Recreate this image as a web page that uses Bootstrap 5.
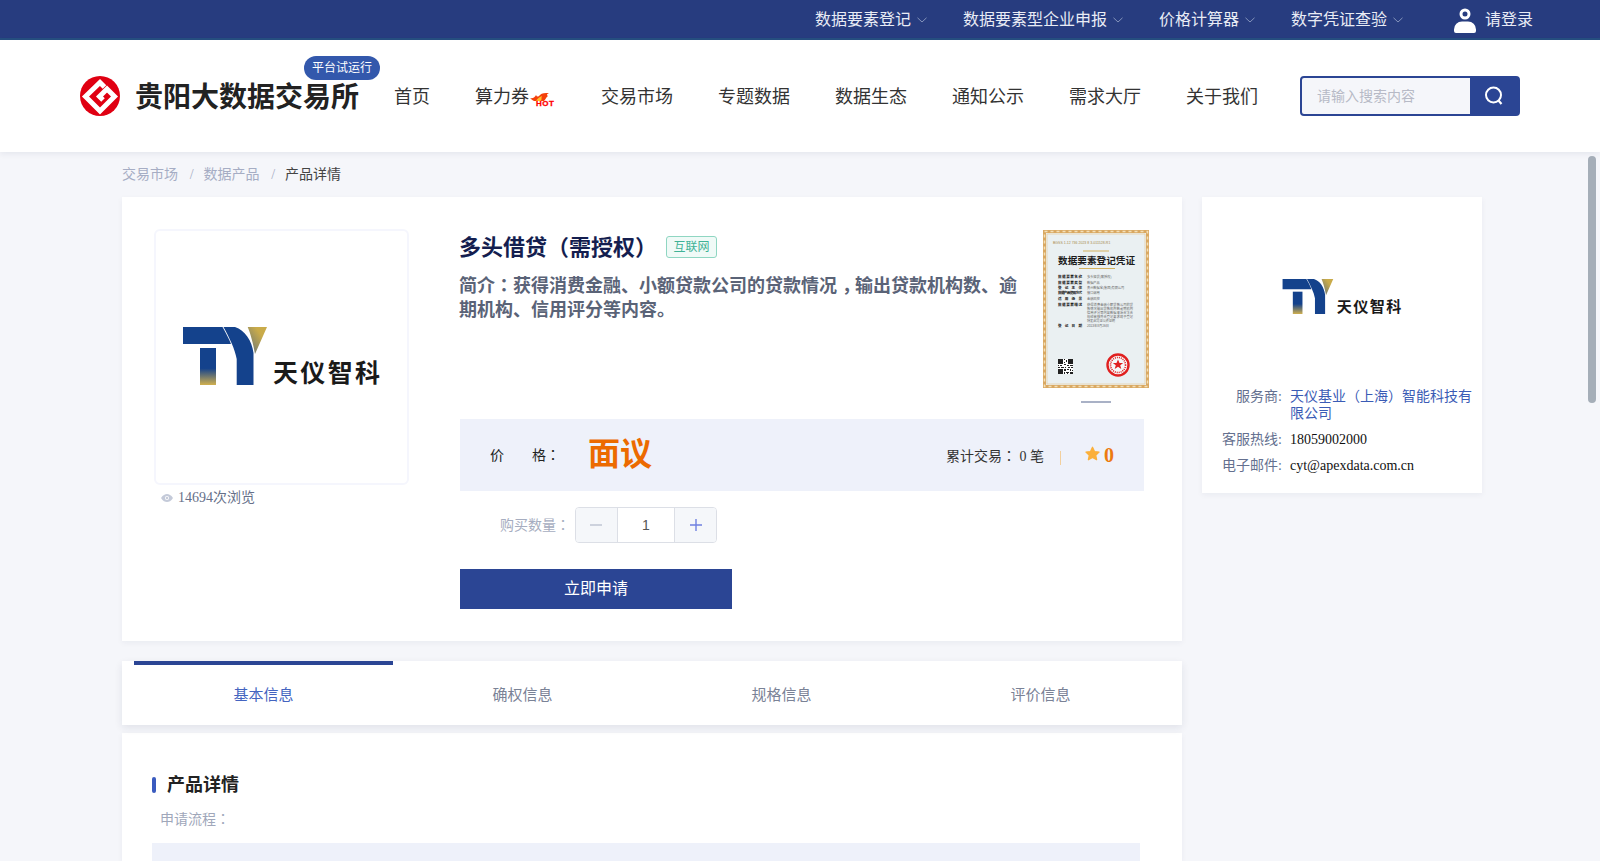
<!DOCTYPE html>
<html lang="zh-CN">
<head>
  <meta charset="UTF-8">
  <title>产品详情</title>
  <link href="https://cdn.jsdelivr.net/npm/bootstrap@5.3.0/dist/css/bootstrap.min.css" rel="stylesheet">
  <style>
    html, body { height: 861px; overflow: hidden; }
    body {
      background: #f5f6fa;
      font-family: "Liberation Serif", "Noto Sans CJK SC", serif;
      font-size: 14px;
      color: #222;
    }
    .cn-sans { font-family: "Liberation Sans", "Noto Sans CJK SC", sans-serif; }
    .mid-punct { font-family: "Noto Sans CJK TC", sans-serif; line-height: 1; }
    .low-comma { padding-left: 5px; margin-right: -5px; }

    .top-strip { height: 40px; background: #273c7f; border-bottom: 2px solid #264f80; padding: 2px 67px 0 0; color: #e9ecf5; font-size: 16px; }
    .top-item { gap: 6px; margin-right: 36px; }
    .top-item:nth-child(4) { margin-right: 51px; }
    .top-user { gap: 9px; }

    .site-head { height: 112px; background: #fff; padding-left: 80px; box-shadow: 0 2px 6px rgba(20, 30, 70, .07); position: relative; }
    .brand-name { font-size: 28px; font-weight: 700; color: #222; margin-left: 15px; width: 224px; padding-top: 3px; white-space: nowrap; }
    .trial-tag { position: absolute; left: 304px; top: 16px; width: 76px; height: 24px; border-radius: 12px; background: #3358ac; color: #fff; font-size: 12px; line-height: 24px; text-align: center; }
    .main-nav { margin-left: 35px; gap: 45px; padding-top: 2px; font-size: 18px; color: #333; }
    .main-nav span { white-space: nowrap; }
    .hot-mark { margin-bottom: -2px; }
    .search-box { width: 220px; height: 40px; margin-left: 42px; border: 2px solid #2b4594; border-radius: 4px; background: #2b4594; overflow: hidden; }
    .search-box input { width: 168px; height: 36px; border: 0; outline: 0; background: #f5f6fa; padding-left: 15px; font-size: 14px; font-family: inherit; }
    .search-box input::placeholder { color: #b7bac6; }
    .search-go { width: 48px; }

    .page-wrap { width: 1360px; margin-left: 122px; }
    .crumbs { height: 45px; color: #a6adc4; }
    .crumbs i { font-style: normal; margin: 0 8px 0 10px; width: 7.5px; text-align: center; display: inline-block; }
    .crumbs b { font-weight: 400; color: #444; }

    .left-col { width: 1060px; }
    .right-col { width: 280px; margin-left: 20px; }
    .white-panel { background: #fff; box-shadow: 0 2px 6px rgba(20, 30, 70, .05); }

    .product-panel { padding: 32px 38px 32px 32px; }
    .img-frame { width: 255px; height: 256px; border: 2px solid #f5f6fd; border-radius: 6px; padding-top: 96px; padding-left: 27px; }
    .view-count { color: #667089; margin-top: 3px; padding-left: 7px; gap: 5px; line-height: 20px; }
    .info-col { width: 684px; margin-left: 51px; }
    .info-top { height: 174px; margin-right: -5px; }
    .info-text { width: 565px; padding-top: 2px; margin-left: -1px; }
    .prod-title { font-size: 22px; font-weight: 700; line-height: 34px; color: #141e4f; margin: 0; }
    .tag-net { width: 51px; height: 22px; margin-left: 9px; margin-top: 5px; border: 1px solid #8fd6c2; border-radius: 3px; background: #f0faf7; color: #3fb296; font-size: 12px; line-height: 20px; text-align: center; }
    .prod-intro { font-size: 18px; font-weight: 700; line-height: 24px; color: #5a6377; margin: 9px 0 0; }
    .cert-wrap { width: 106px; margin-top: 1px; }
    .cert-dot { width: 30px; height: 2px; background: #a9b1c6; margin: 13px auto 0; }

    .price-bar { height: 72px; margin-top: 16px; padding: 0 30px; background: #eef1fa; }
    .price-num { font-size: 32px; font-weight: 700; color: #ec6a00; margin-left: 28px; margin-top: -2px; }
    .trade-sum { color: #333; margin-top: 2px; }
    .v-line { width: 1px; height: 14px; background: #f2cf9d; margin: 6px 24px 0 16px; }
    .score { font-size: 20px; font-weight: 700; color: #ec7a10; gap: 4px; }
    .score svg { margin-top: -3px; }

    .qty-row { margin-top: 16px; }
    .qty-label { width: 70px; margin-left: 40px; margin-right: 5px; color: #a6adc0; white-space: nowrap; }
    .qty-box { width: 142px; height: 36px; border: 1px solid #dcdfe6; border-radius: 4px; overflow: hidden; }
    .qty-btn { width: 41px; background: #f5f7fa; }
    .qty-val { width: 59px; background: #fff; border-left: 1px solid #dcdfe6; border-right: 1px solid #dcdfe6; color: #555; font-family: "Liberation Sans", sans-serif; }
    .apply-btn { display: block; width: 272px; height: 40px; margin-top: 26px; padding: 0; border: 0; border-radius: 0; background: #2b4594; color: #fff; font-size: 16px; font-family: inherit; }

    .tab-strip { height: 64px; margin-top: 20px; padding-left: 12px; box-shadow: 0 3px 8px rgba(20, 30, 70, .09); position: relative; }
    .tab-one { width: 259px; font-size: 15px; color: #7a8296; border-top: 4px solid transparent; }
    .tab-one.on { color: #4464c0; border-top-color: #2b4594; }

    .detail-panel { margin-top: 8px; height: 128px; padding: 40px 42px 0 30px; overflow: hidden; }
    .sec-title { font-size: 18px; font-weight: 700; line-height: 24px; color: #222; gap: 11px; }
    .sec-title::before { content: ""; width: 4px; height: 16px; border-radius: 2px; background: #3a5bbf; }
    .flow-label { margin: 13px 0 13px 8px; line-height: 20px; color: #a0a7ba; }
    .flow-block { height: 120px; background: #eef1fa; }

    .seller-panel { padding: 82px 10px 19px 0; }
    .seller-logo { padding-left: 80px; margin-bottom: 74px; }
    .seller-row { line-height: 17px; margin-bottom: 9px; }
    .seller-row:last-child { margin-bottom: 0; }
    .seller-key { width: 80px; flex: none; text-align: right; color: #64708f; margin-right: 8px; white-space: nowrap; }
    .seller-val { color: #111; }
    .seller-val.link-blue { color: #3a5bb5; }

    .fake-thumb { position: fixed; left: 1588px; top: 156px; width: 8px; height: 247px; border-radius: 4px; background: #a5aeb8; }
  </style>
</head>
<body>
  <svg width="0" height="0" class="d-block position-absolute">
    <defs>
      <linearGradient id="stemFade" x1="0" y1="0" x2="0" y2="1">
        <stop offset="0.55" stop-color="#14428c"/>
        <stop offset="1" stop-color="#d1b04e"/>
      </linearGradient>
      <linearGradient id="wingFade" x1="1" y1="0" x2="0" y2="1">
        <stop offset="0.3" stop-color="#c9ab4a"/>
        <stop offset="1" stop-color="#5d6f7e"/>
      </linearGradient>
      <symbol id="tyLogo" viewBox="0 0 197 58">
        <path d="M0 0H39.500C43 6 46 12 48 17H0Z" fill="#14428c"/>
        <path d="M17 21H33V58H17Z" fill="url(#stemFade)"/>
        <path d="M40.500 0H52C62 3 69 14 70.500 26V58H53.700V32C52 22 46 10 40.500 0Z" fill="#14428c"/>
        <path d="M64.700 0H84L72 27C70 16 68 8 64.700 0Z" fill="url(#wingFade)"/>
        <text x="90" y="55" font-family="Noto Sans CJK SC" font-size="25" font-weight="700" fill="#1a1a1a" textLength="107">天仪智科</text>
      </symbol>
    </defs>
  </svg>

  <div class="top-strip d-flex justify-content-end align-items-center cn-sans">
    <div class="top-item d-flex align-items-center"><span>数据要素登记</span><svg width="10" height="6" viewBox="0 0 10 6"><path d="M.5.8 5 5 9.500.8" fill="none" stroke="#8493bb"/></svg></div>
    <div class="top-item d-flex align-items-center"><span>数据要素型企业申报</span><svg width="10" height="6" viewBox="0 0 10 6"><path d="M.5.8 5 5 9.500.8" fill="none" stroke="#8493bb"/></svg></div>
    <div class="top-item d-flex align-items-center"><span>价格计算器</span><svg width="10" height="6" viewBox="0 0 10 6"><path d="M.5.8 5 5 9.500.8" fill="none" stroke="#8493bb"/></svg></div>
    <div class="top-item d-flex align-items-center"><span>数字凭证查验</span><svg width="10" height="6" viewBox="0 0 10 6"><path d="M.5.8 5 5 9.500.8" fill="none" stroke="#8493bb"/></svg></div>
    <div class="top-user d-flex align-items-center">
      <svg width="22" height="26" viewBox="0 0 22 26"><circle cx="11" cy="7" r="4" fill="none" stroke="#fff" stroke-width="3"/><path d="M8 14.500h6a8 8 0 0 1 8 8V24a2 2 0 0 1-2 2H2a2 2 0 0 1-2-2v-1.500a8 8 0 0 1 8-8Z" fill="#fff"/></svg>
      <span>请登录</span>
    </div>
  </div>

  <header class="site-head d-flex align-items-center cn-sans">
    <svg width="40" height="40" viewBox="0 0 40 40"><circle cx="20" cy="20" r="20" fill="#e00012"/><path d="M24.500 11 20 6.500 5.500 20.500 20 35 34.500 20.500 27 13 19.500 20.500 23 24" fill="none" stroke="#fff" stroke-width="5"/></svg>
    <div class="brand-name">贵阳大数据交易所</div>
    <div class="trial-tag">平台试运行</div>
    <nav class="main-nav d-flex align-items-center">
      <span>首页</span>
      <span class="d-flex align-items-center">算力券<svg class="hot-mark" width="27" height="18" viewBox="0 0 27 18"><path d="M1 9C4 10 6 8 7 6 8 8 9 8 11 6 13 4 16 4 20 4 18 5 17 6 19 7 17 8 17 10 15 12H5C3 11 2 10 1 9Z" fill="#f4400a"/><path d="M7 12C8 10 10 8 13 7 12 9 13 10 12 12Z" fill="#ffc02a"/><text x="7" y="17" font-family="Liberation Sans" font-size="8" font-weight="700" fill="#f00" stroke="#f00" stroke-width=".3" textLength="18">HOT</text></svg></span>
      <span>交易市场</span>
      <span>专题数据</span>
      <span>数据生态</span>
      <span>通知公示</span>
      <span>需求大厅</span>
      <span>关于我们</span>
    </nav>
    <div class="search-box d-flex">
      <input type="text" placeholder="请输入搜索内容">
      <div class="search-go d-flex justify-content-center align-items-center">
        <svg width="20" height="20" viewBox="0 0 20 20"><circle cx="9.500" cy="9" r="7.500" fill="none" stroke="#fff" stroke-width="2"/><path d="M14.500 14.500 17.500 18" stroke="#fff" stroke-width="2.200"/></svg>
      </div>
    </div>
  </header>

  <div class="page-wrap">
    <div class="crumbs d-flex align-items-center">
      <span>交易市场</span><i>/</i><span>数据产品</span><i>/</i><b>产品详情</b>
    </div>
    <div class="d-flex align-items-start">
      <div class="left-col">
        <section class="white-panel product-panel d-flex">
          <div>
            <div class="img-frame">
              <svg width="197" height="58"><use href="#tyLogo"/></svg>
            </div>
            <div class="view-count d-flex align-items-center">
              <svg width="12" height="8" viewBox="0 0 12 8"><path d="M0 4C2 1 4 0 6 0s4 1 6 4C10 7 8 8 6 8S2 7 0 4Z" fill="#c4cad9"/><circle cx="6" cy="4" r="2" fill="#fff"/><circle cx="6" cy="4" r="1.200" fill="#c4cad9"/></svg>
              <span>14694次浏览</span>
            </div>
          </div>
          <div class="info-col">
            <div class="info-top d-flex justify-content-between">
              <div class="info-text">
                <div class="d-flex align-items-start">
                  <h1 class="prod-title">多头借贷（需授权）</h1>
                  <div class="tag-net">互联网</div>
                </div>
                <p class="prod-intro">简介<span class="mid-punct" lang="zh-Hant">：</span>获得消费金融、小额贷款公司的贷款情况<span class="low-comma">，</span>输出贷款机构数、逾期机构、信用评分等内容。</p>
              </div>
              <div class="cert-wrap">
                <svg width="106" height="158" viewBox="0 0 106 158" class="d-block">
                  <rect width="106" height="158" fill="#eaf0f2"/>
                  <rect x="1.500" y="1.500" width="103" height="155" fill="none" stroke="#d9a862" stroke-width="3"/>
                  <rect x="1.500" y="1.500" width="103" height="155" fill="none" stroke="#f4dfb8" stroke-width="1.500" stroke-dasharray="3 3"/>
                  <rect x="4" y="4" width="98" height="150" fill="none" stroke="#e3c690" stroke-width=".6"/>
                  <text x="10" y="14" font-family="Liberation Sans" font-size="3.500" fill="#a98b4b">BGSS 1-12 736 2023 8 3-011528-R1</text>
                  <path d="M40 21h26M36 38.500h36" stroke="#d4b25f" stroke-width="1"/>
                  <text x="15" y="34" font-family="Noto Sans CJK SC" font-size="9.600" font-weight="700" fill="#1c1c1c" textLength="77">数据要素登记凭证</text>
                  <g font-family="Noto Sans CJK SC" font-size="3.600" fill="#222" font-weight="700">
                    <text x="15" y="48" textLength="24">数据要素名称</text>
                    <text x="15" y="53.500" textLength="24">数据要素类型</text>
                    <text x="15" y="59" textLength="24">登 记 主 体</text>
                    <text x="15" y="64" textLength="24">数据产品使用方式</text>
                    <text x="15" y="69.500" textLength="24">适 用 场 景</text>
                    <text x="15" y="75.500" textLength="24">数据要素描述</text>
                    <text x="15" y="96.500" textLength="24">登 记 日 期</text>
                  </g>
                  <g font-family="Noto Sans CJK SC" font-size="3.200" fill="#666">
                    <text x="44" y="48">多头借贷(需授权)</text>
                    <text x="44" y="53.500">数据产品</text>
                    <text x="44" y="59">贵州数据宝(集团)有限公司</text>
                    <text x="44" y="64">接口调用</text>
                    <text x="44" y="69.500">金融风控</text>
                    <text x="44" y="75.500" textLength="46">获得消费金融小额贷款公司的贷</text>
                    <text x="44" y="79.500" textLength="46">款情况输出贷款机构数逾期机构</text>
                    <text x="44" y="83.500" textLength="46">信用评分等内容数据来源合法合</text>
                    <text x="44" y="87.500" textLength="46">规经审核符合登记要求现予登记</text>
                    <text x="44" y="91.500" textLength="28">特发此凭证以资证明</text>
                    <text x="44" y="96.500">2023年8月26日</text>
                  </g>
                  <rect x="15" y="129" width="15" height="15" fill="#fff"/>
                  <path d="M15 129h5v5h-5zM25 129h5v5h-5zM15 139h5v5h-5zM21 129h1v1h-1zM23 130h1v2h-1zM21 132h1v1h-1zM21 134h2v1h-2zM24 135h2v1h-2zM15 135h1v1h-1zM17 135h2v1h-2zM27 135h3v1h-3zM15 137h2v1h-2zM18 137h3v1h-3zM22 137h1v1h-1zM25 137h2v1h-2zM28 137h2v1h-2zM21 139h2v2h-2zM24 139h2v1h-2zM27 139h1v2h-1zM29 140h1v1h-1zM21 142h1v2h-1zM23 142h3v1h-3zM27 142h3v2h-3zM24 144h1v-1h-1z" fill="#222"/>
                  <circle cx="75" cy="135" r="10.500" fill="#fff" fill-opacity=".5" stroke="#e02020" stroke-width="2.400"/>
                  <circle cx="75" cy="135" r="7.500" fill="none" stroke="#e02020" stroke-width="1.600" stroke-dasharray="1 1"/>
                  <path d="M75 129.500l1.500 3.500h3.700l-3 2.300 1.100 3.700-3.300-2.200-3.300 2.200 1.100-3.700-3-2.300h3.700z" fill="#e02020"/>
                </svg>
                <div class="cert-dot"></div>
              </div>
            </div>
            <div class="price-bar d-flex align-items-center">
              <span>价　　格<span class="mid-punct" lang="zh-Hant">：</span></span>
              <span class="price-num cn-sans">面议</span>
              <div class="ms-auto d-flex align-items-center">
                <span class="trade-sum">累计交易<span class="mid-punct" lang="zh-Hant">：</span> 0 笔</span>
                <span class="v-line"></span>
                <span class="score d-flex align-items-center">
                  <svg width="15" height="15" viewBox="0 0 24 24"><path d="M12 2l3.200 6.800 7.300.9-5.400 5 1.500 7.300L12 18.400 5.400 22l1.500-7.300-5.400-5 7.300-.9Z" fill="#fbb03b" stroke="#fbb03b" stroke-width="2" stroke-linejoin="round"/></svg>
                  <span>0</span>
                </span>
              </div>
            </div>
            <div class="qty-row d-flex align-items-center">
              <span class="qty-label">购买数量<span class="mid-punct" lang="zh-Hant">：</span></span>
              <div class="qty-box d-flex">
                <div class="qty-btn d-flex justify-content-center align-items-center"><svg width="12" height="12" viewBox="0 0 12 12"><path d="M0 6h12" stroke="#a6adc0" stroke-width="1.200"/></svg></div>
                <div class="qty-val d-flex justify-content-center align-items-center">1</div>
                <div class="qty-btn d-flex justify-content-center align-items-center"><svg width="12" height="12" viewBox="0 0 12 12"><path d="M0 6h12M6 0v12" stroke="#6f80e0" stroke-width="1.400"/></svg></div>
              </div>
            </div>
            <button type="button" class="btn apply-btn">立即申请</button>
          </div>
        </section>

        <div class="white-panel tab-strip d-flex">
          <div class="tab-one on d-flex justify-content-center align-items-center">基本信息</div>
          <div class="tab-one d-flex justify-content-center align-items-center">确权信息</div>
          <div class="tab-one d-flex justify-content-center align-items-center">规格信息</div>
          <div class="tab-one d-flex justify-content-center align-items-center">评价信息</div>
        </div>

        <section class="white-panel detail-panel">
          <div class="sec-title d-flex align-items-center">产品详情</div>
          <div class="flow-label">申请流程<span class="mid-punct" lang="zh-Hant">：</span></div>
          <div class="flow-block"></div>
        </section>
      </div>

      <aside class="right-col white-panel seller-panel">
        <div class="seller-logo"><svg width="120" height="35" class="d-block"><use href="#tyLogo"/></svg></div>
        <div class="seller-row d-flex"><span class="seller-key">服务商:</span><span class="seller-val link-blue">天仪基业（上海）智能科技有限公司</span></div>
        <div class="seller-row d-flex"><span class="seller-key">客服热线:</span><span class="seller-val">18059002000</span></div>
        <div class="seller-row d-flex"><span class="seller-key">电子邮件:</span><span class="seller-val">cyt@apexdata.com.cn</span></div>
      </aside>
    </div>
  </div>

  <div class="fake-thumb"></div>
</body>
</html>
